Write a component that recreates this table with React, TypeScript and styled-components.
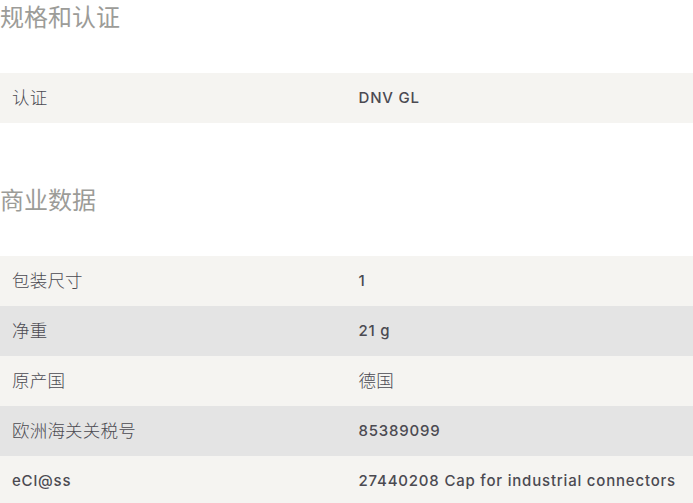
import React, { FunctionComponent } from "react";
import styled, { createGlobalStyle } from "styled-components";

const GlobalStyle = createGlobalStyle`
  html, body {
    margin: 0;
    padding: 0;
    background: #fff;
  }
  body {
    font-family: Inter, "Noto Sans CJK SC", sans-serif;
  }
`;

const Page = styled.div`
  width: 693px;
  display: flex;
  flex-direction: column;
`;

const Section = styled.section`
  display: flex;
  flex-direction: column;
  & + & {
    margin-top: 60px;
  }
`;

const Heading = styled.h2`
  margin: 0 0 37px;
  font-size: 24px;
  line-height: 36px;
  font-weight: 400;
  color: #9c9c98;
`;

const Table = styled.div`
  display: flex;
  flex-direction: column;
`;

const Row = styled.div<{ $shade: boolean }>`
  display: grid;
  grid-template-columns: 1fr 1fr;
  height: 50px;
  align-items: center;
  background: ${(p) => (p.$shade ? "#e4e4e4" : "#f5f4f1")};
`;

const Cell = styled.div<{ $cjk: boolean }>`
  padding: 0 12px;
  font-size: ${(p) => (p.$cjk ? "17.5px" : "15px")};
  font-weight: ${(p) => (p.$cjk ? 300 : 500)};
  letter-spacing: ${(p) => (p.$cjk ? "0.2px" : "0.8px")};
  line-height: 24px;
  color: #4b4a51;
  white-space: nowrap;
`;

interface Entry {
  label: string;
  value: string;
}

const certs: Entry[] = [{ label: "认证", value: "DNV GL" }];

const commerce: Entry[] = [
  { label: "包装尺寸", value: "1" },
  { label: "净重", value: "21 g" },
  { label: "原产国", value: "德国" },
  { label: "欧洲海关关税号", value: "85389099" },
  { label: "eCl@ss", value: "27440208 Cap for industrial connectors" },
];

const isCjk = (s: string) => /[\u4e00-\u9fff]/.test(s);

const DataTable: FunctionComponent<{ rows: Entry[] }> = ({ rows }) => (
  <Table>
    {rows.map((r, i) => (
      <Row key={r.label} $shade={i % 2 === 1}>
        <Cell $cjk={isCjk(r.label)}>{r.label}</Cell>
        <Cell $cjk={isCjk(r.value)}>{r.value}</Cell>
      </Row>
    ))}
  </Table>
);

const App: FunctionComponent = () => (
  <Page>
    <GlobalStyle />
    <Section>
      <Heading>规格和认证</Heading>
      <DataTable rows={certs} />
    </Section>
    <Section>
      <Heading>商业数据</Heading>
      <DataTable rows={commerce} />
    </Section>
  </Page>
);

export default App;
